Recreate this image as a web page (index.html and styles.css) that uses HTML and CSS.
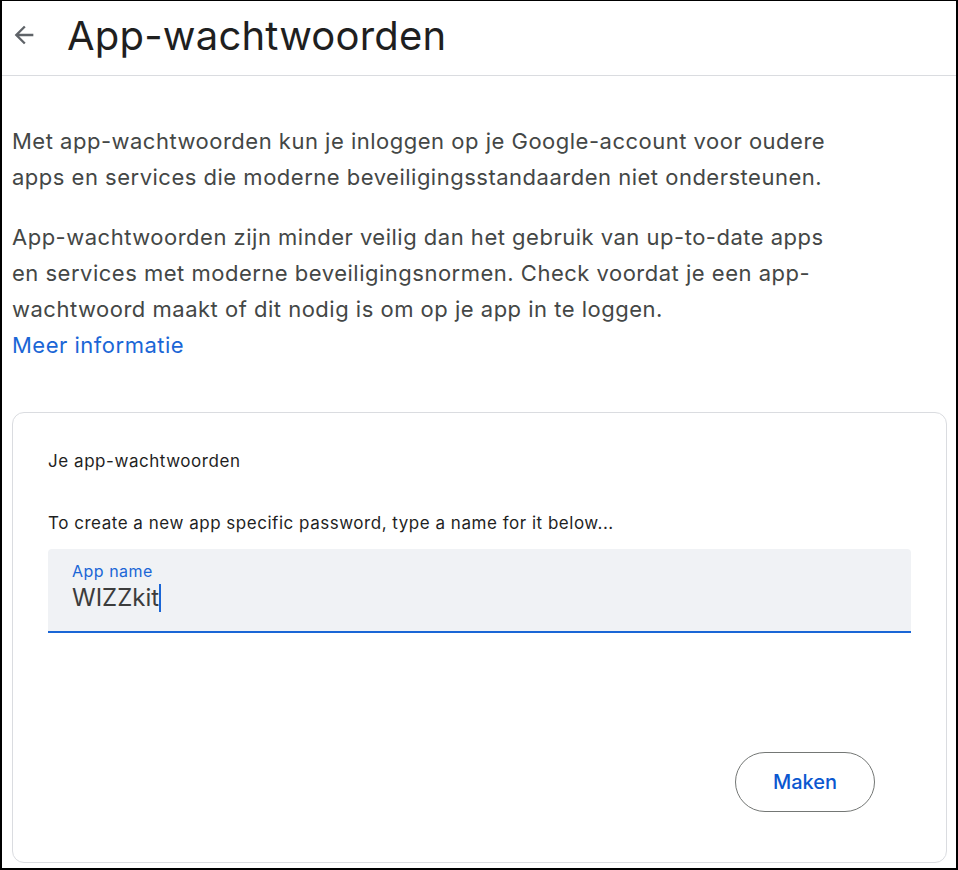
FILE: index.html
```html
<!DOCTYPE html>
<html lang="nl">
<head>
<meta charset="utf-8">
<title>App-wachtwoorden</title>
<link rel="stylesheet" href="styles.css">
</head>
<body>
<div class="frame">
  <header class="topbar">
    <span class="back" aria-label="Terug">
      <svg width="24" height="24" viewBox="0 0 24 24"><path d="M20 11H7.83l5.59-5.59L12 4l-8 8 8 8 1.41-1.41L7.83 13H20v-2z" fill="#5f6368"/></svg>
    </span>
    <h1 class="title">App-wachtwoorden</h1>
  </header>
  <main class="content">
    <p class="para">Met app-wachtwoorden kun je inloggen op je Google-account voor oudere apps en services die moderne beveiligingsstandaarden niet ondersteunen.</p>
    <p class="para">App-wachtwoorden zijn minder veilig dan het gebruik van up-to-date apps en services met moderne beveiligingsnormen. Check voordat je een app-wachtwoord maakt of dit nodig is om op je app in te loggen. <a class="link" href="#">Meer informatie</a></p>
    <section class="card">
      <div class="card-title">Je app-wachtwoorden</div>
      <div class="hint">To create a new app specific password, type a name for it below...</div>
      <div class="field">
        <div class="field-label">App name</div>
        <div class="field-value">WIZZkit<span class="caret"></span></div>
      </div>
      <div class="actions">
        <button class="btn">Maken</button>
      </div>
    </section>
  </main>
</div>
</body>
</html>
```

FILE: styles.css
```css
* { box-sizing: border-box; }
html, body { margin: 0; padding: 0; background: #fff; }
body { font-family: "Inter", "Open Sans", sans-serif; color: #444746; }
.frame {
  width: 958px;
  height: 870px;
  border-style: solid;
  border-color: #000;
  border-width: 1px 2px 2px 2px;
  overflow: hidden;
  display: flex;
  flex-direction: column;
}
.topbar {
  height: 75px;
  border-bottom: 1px solid #dadce0;
  display: flex;
  align-items: center;
  padding: 0 0 6px 10px;
}
.back { width: 24px; height: 24px; display: flex; margin-right: 31px; }
.back svg { width: 28px; height: 28px; margin: -2px; }
.title {
  margin: 0;
  font-family: "Inter", sans-serif;
  font-weight: 400;
  font-size: 40px;
  letter-spacing: 0.2px;
  color: #1f1f1f;
}
.content { padding: 47px 9px 0 10px; }
.para {
  margin: 0 0 24px 0;
  font-size: 22px;
  line-height: 36px;
  letter-spacing: 0.5px;
  width: 828px;
}
.link { color: #1a66d6; text-decoration: none; display: block; }
.card {
  margin-top: 49px;
  border: 1px solid #dadce0;
  border-radius: 12px;
  height: 451px;
  padding: 36px 35px 0 35px;
  display: flex;
  flex-direction: column;
}
.card-title { font-size: 17px; line-height: 24px; letter-spacing: 0.55px; color: #1f1f1f; }
.hint { margin-top: 38px; font-size: 17px; line-height: 24px; letter-spacing: 0.52px; color: #1f1f1f; }
.field {
  margin-top: 14px;
  background: #f0f2f5;
  border-radius: 4px 4px 0 0;
  border-bottom: 2px solid #1a66d6;
  height: 84px;
  padding: 11px 24px 0 24px;
}
.field-label { font-size: 16px; line-height: 22px; letter-spacing: 0.5px; color: #1a66d6; }
.field-value { font-size: 24px; line-height: 32px; color: #3c3c3c; display: flex; align-items: center; }
.caret { display: inline-block; width: 2px; height: 28px; background: #1a66d6; }
.actions { display: flex; justify-content: flex-end; margin-top: 119px; padding-right: 36px; }
.btn {
  width: 140px;
  height: 60px;
  border: 1px solid #747775;
  border-radius: 30px;
  background: #fff;
  color: #0b57d0;
  font-family: "Inter", sans-serif;
  font-size: 20px;
  font-weight: 500;
  cursor: pointer;
}
```
